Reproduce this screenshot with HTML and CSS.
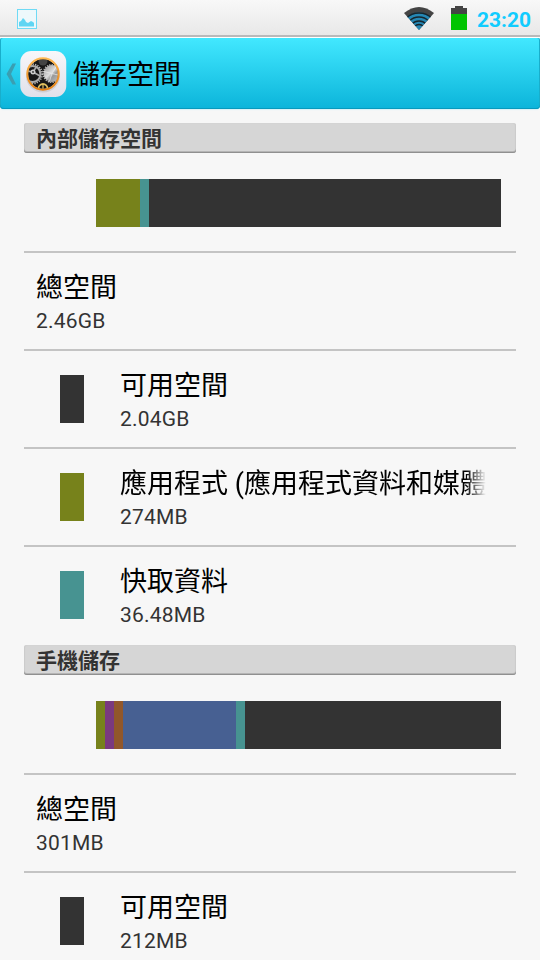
FILE: index.html
```html
<!DOCTYPE html>
<html lang="zh-Hant">
<head>
  <meta charset="UTF-8">
  <meta name="viewport" content="width=device-width, initial-scale=1.0">
  <title>儲存空間</title>
  <link rel="stylesheet" href="styles.css">
</head>
<body>

  <!-- Status bar -->
  <div class="status-bar">
    <svg class="picture-icon" width="20" height="20" viewBox="0 0 20 20">
      <rect x="0.5" y="0.5" width="19" height="19" fill="#edf8fb" stroke="#6fdaf5"/>
      <path d="M2 17.500V13l2-1 2-3 2 2 1 2 2 1 3-2 2 1 1 1v3.500z" fill="#5fd5f3"/>
    </svg>
    <div class="status-right">
      <svg class="wifi-icon" width="30" height="24" viewBox="0 0 30 24">
        <defs>
          <clipPath id="fan"><path d="M0 6Q15-6 30 6L15 23z"/></clipPath>
        </defs>
        <g clip-path="url(#fan)">
          <rect width="30" height="24" fill="#444"/>
          <circle cx="15" cy="24" r="18.500" fill="#2587b4"/>
          <g fill="none" stroke="#17262d" stroke-width="1.300">
            <circle cx="15" cy="24" r="18"/>
            <circle cx="15" cy="24" r="14"/>
            <circle cx="15" cy="24" r="10"/>
            <circle cx="15" cy="24" r="6.500"/>
          </g>
        </g>
      </svg>
      <svg class="battery-icon" width="16" height="24" viewBox="0 0 16 24">
        <path d="M4 0h8v2h4v6H0V2h4z" fill="#444"/>
        <rect y="8" width="16" height="16" fill="#00c400"/>
      </svg>
      <span class="clock">23:20</span>
    </div>
  </div>

  <!-- Title bar -->
  <div class="action-bar">
    <svg class="back-icon" width="11" height="22" viewBox="0 0 11 22">
      <path d="M6.500 0.500H10L5 11l5 10.500H6.500L0.500 11z" fill="#3a9fb2"/>
    </svg>
    <svg class="app-icon" width="47" height="48" viewBox="0 0 47 48">
      <defs>
        <linearGradient id="tile" x1="0" y1="0" x2="0" y2="1">
          <stop offset="0" stop-color="#f7f7fa"/>
          <stop offset="1" stop-color="#e0e0ea"/>
        </linearGradient>
        <linearGradient id="ring" x1="0" y1="0" x2="0" y2="1">
          <stop offset="0" stop-color="#ffb950"/>
          <stop offset="1" stop-color="#e57f10"/>
        </linearGradient>
        <linearGradient id="steel" x1="0" y1="0" x2="1" y2="1">
          <stop offset="0" stop-color="#8f8f8f"/>
          <stop offset="0.450" stop-color="#dcdcdc"/>
          <stop offset="0.600" stop-color="#999"/>
          <stop offset="1" stop-color="#c4c4c4"/>
        </linearGradient>
        <clipPath id="dial"><circle cx="23" cy="24" r="15"/></clipPath>
      </defs>
      <rect x="0.250" y="1" width="46" height="46" rx="11" fill="url(#tile)"/>
      <ellipse cx="23" cy="26.500" rx="17" ry="16" fill="#bbb9bd" opacity="0.500"/>
      <circle cx="23" cy="24" r="15" fill="#171717"/>
      <g clip-path="url(#dial)">
        <circle cx="23" cy="11" r="4.500" fill="#444"/>
        <!-- Right wheel -->
        <circle cx="32" cy="23.500" r="8.500" fill="url(#steel)"/>
        <circle cx="32" cy="23.500" r="8.800" fill="none" stroke="#b5b5b5" stroke-width="1.600" stroke-dasharray="1.200 1.200"/>
        <path d="M32 23.500l-8-2M32 23.500l5-8M32 23.500l-3 9M32 23.500l8 2" stroke="#ededed" stroke-width="0.700"/>
        <!-- Left gear -->
        <circle cx="12.500" cy="24" r="8" fill="none" stroke="#a8a8a8" stroke-width="2.200"/>
        <circle cx="12.500" cy="24" r="9.700" fill="none" stroke="#bbb" stroke-width="1.600" stroke-dasharray="1.200 1.200"/>
        <path d="M13 22l7 4M13 22l4-6M13 22l-6-1" stroke="#aaa" stroke-width="1.600"/>
        <circle cx="13" cy="22" r="2.500" fill="#ccc"/>
        <circle cx="13" cy="22" r="0.900" fill="#333"/>
        <!-- Brass gear -->
        <circle cx="23" cy="38.500" r="4.500" fill="none" stroke="#e0c060" stroke-width="1.800"/>
        <path d="M23 34v5" stroke="#e0c060" stroke-width="1.200"/>
      </g>
      <circle cx="23" cy="24" r="15.700" fill="none" stroke="url(#ring)" stroke-width="2"/>
    </svg>
    <h1>儲存空間</h1>
  </div>

  <div class="content">
    <!-- Internal storage -->
    <h2 class="category">內部儲存空間</h2>
    <div class="usage">
      <div class="usage-bar">
        <span class="apps" style="width: 44px"></span>
        <span class="cache" style="width: 9px"></span>
      </div>
    </div>
    <div class="item">
      <div class="item-text">
        <div class="title">總空間</div>
        <div class="summary">2.46GB</div>
      </div>
    </div>
    <div class="item">
      <span class="swatch free"></span>
      <div class="item-text">
        <div class="title">可用空間</div>
        <div class="summary">2.04GB</div>
      </div>
    </div>
    <div class="item">
      <span class="swatch apps"></span>
      <div class="item-text">
        <div class="title fade">應用程式 (應用程式資料和媒體</div>
        <div class="summary">274MB</div>
      </div>
    </div>
    <div class="item">
      <span class="swatch cache"></span>
      <div class="item-text">
        <div class="title">快取資料</div>
        <div class="summary">36.48MB</div>
      </div>
    </div>

    <!-- Phone storage -->
    <h2 class="category next">手機儲存</h2>
    <div class="usage">
      <div class="usage-bar">
        <span class="apps" style="width: 9px"></span>
        <span class="pictures" style="width: 9px"></span>
        <span class="audio" style="width: 9px"></span>
        <span class="misc" style="width: 113px"></span>
        <span class="cache" style="width: 9px"></span>
      </div>
    </div>
    <div class="item">
      <div class="item-text">
        <div class="title">總空間</div>
        <div class="summary">301MB</div>
      </div>
    </div>
    <div class="item">
      <span class="swatch free"></span>
      <div class="item-text">
        <div class="title">可用空間</div>
        <div class="summary">212MB</div>
      </div>
    </div>
  </div>

</body>
</html>
```
FILE: styles.css
```css
* {
  box-sizing: border-box;
}
body {
  margin: 0;
  height: 960px;
  overflow: hidden;
  background-color: #f7f7f7;
  color: #000;
  font-family: Roboto, "Noto Sans CJK TC", sans-serif;
}
h1, h2 {
  margin: 0;
}
.status-bar {
  display: flex;
  justify-content: space-between;
  height: 38px;
  padding: 0 9px 0 17px;
  background: linear-gradient(#f8f8f8, #e8e8e8 35px, #b9b9b9 35px, #b9b9b9 37px, #fff 37px);
}
.picture-icon {
  margin-top: 9px;
}
.status-right {
  display: flex;
}
.wifi-icon {
  margin-top: 7px;
}
.battery-icon {
  margin: 6px 10px 0 17px;
}
.clock {
  color: #11ccff;
  font-size: 21px;
  font-weight: bold;
  line-height: 41px;
}
.action-bar {
  display: flex;
  align-items: center;
  height: 71px;
  padding: 0 6px;
  border-radius: 2px 2px 4px 4px;
  background: linear-gradient(#42e8ff, #0bb4da);
  box-shadow: inset 0 -1px 0 #0799bd, inset 1px 0 0 #19aecb, inset -1px 0 0 #19aecb, 0 1px 1px #d5f2f8;
}
.app-icon {
  margin-left: 3px;
}
.action-bar h1 {
  margin-left: 6px;
  padding-top: 2px;
  font-size: 27px;
  font-weight: normal;
  line-height: 40px;
}
.content {
  padding: 14px 24px 0;
}
.category {
  height: 30px;
  padding-left: 12px;
  border-radius: 3px;
  background-color: #d6d6d6;
  box-shadow: inset 0 -1px 0 #909090, inset 0 -2px 0 #b5b5b5, inset 1px 0 1px #cbcbcb, inset -1px 0 1px #cbcbcb;
  color: #333;
  font-size: 21px;
  font-weight: bold;
  line-height: 33px;
}
.next {
  margin-top: 2px;
}
.usage {
  height: 98px;
  padding: 26px 15px 0 72px;
}
.usage-bar {
  display: flex;
  height: 48px;
  background-color: #333;
}
.item {
  display: flex;
  height: 98px;
  padding: 0 30px 0 12px;
  border-top: 2px solid #c4c4c4;
}
.swatch {
  flex: none;
  width: 24px;
  height: 48px;
  margin: 24px 36px 0 24px;
}
.item-text {
  flex: 1;
  min-width: 0;
  padding-top: 15px;
}
.title {
  font-size: 27px;
  line-height: 40px;
  white-space: nowrap;
}
.fade {
  -webkit-mask-image: linear-gradient(to left, transparent, #000 20px);
  mask-image: linear-gradient(to left, transparent, #000 20px);
}
.summary {
  color: #333;
  font-size: 21px;
  letter-spacing: 0.2px;
  line-height: 26px;
}
.free {
  background-color: #333;
}
.apps {
  background-color: #77821b;
}
.cache {
  background-color: #479391;
}
.pictures {
  background-color: #7a397f;
}
.audio {
  background-color: #91572b;
}
.misc {
  background-color: #476092;
}
```
